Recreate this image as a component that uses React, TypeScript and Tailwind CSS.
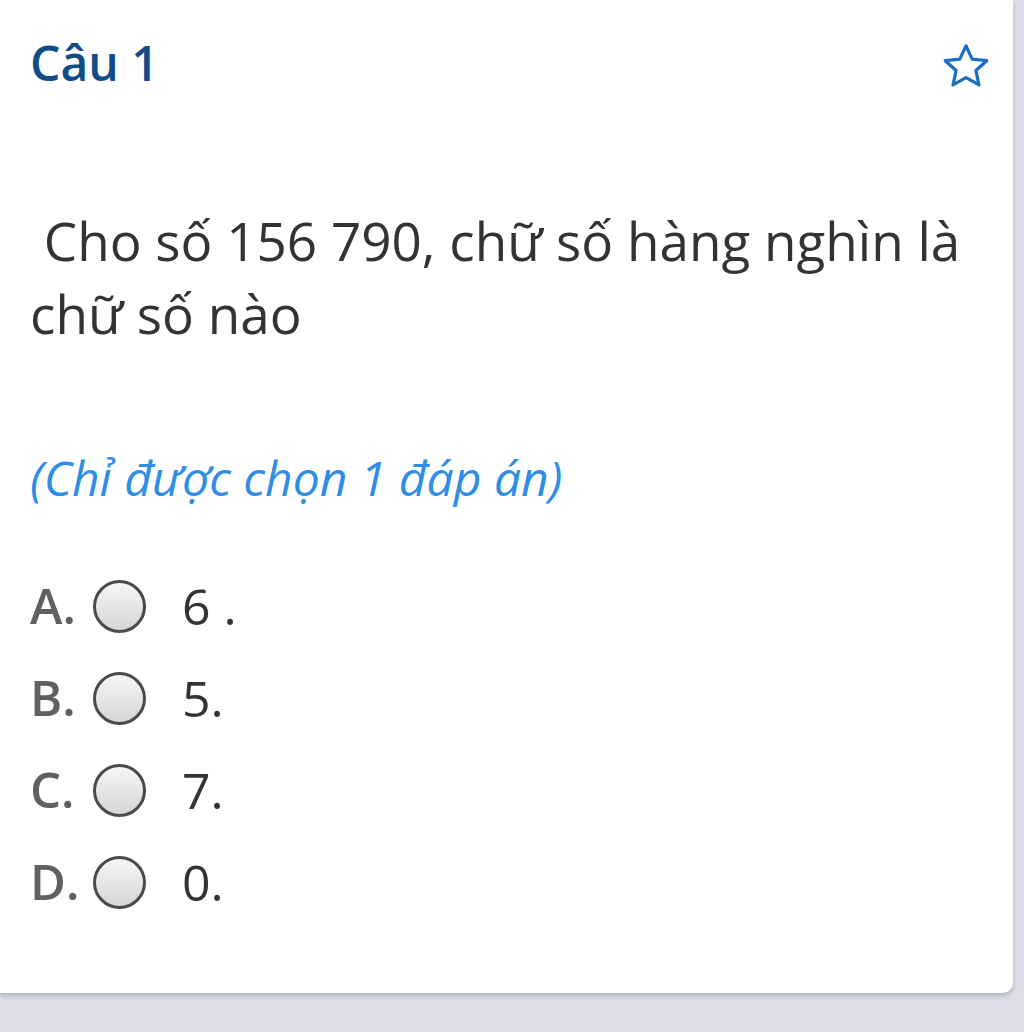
import React from "react";

const options = [
  { key: "A.", value: "6 ." },
  { key: "B.", value: "5." },
  { key: "C.", value: "7." },
  { key: "D.", value: "0." },
];

export default function App() {
  return (
    <div
      className="w-[1024px] h-[1032px] bg-[#dcdde7] overflow-hidden"
      style={{ fontFamily: '"Open Sans", "Noto Sans", sans-serif' }}
    >
      <div className="w-[1013px] h-[993px] bg-white rounded-br-[10px] shadow-[0_3px_4px_rgba(140,145,170,0.55)] pl-[30px] pr-[24px] pt-[28px] flex flex-col">
        <div className="flex items-start justify-between">
          <div className="text-[48px] leading-[70px] font-semibold text-[#124c87]">Câu 1</div>
          <svg width="54" height="54" viewBox="0 0 24 24" className="mt-[12px] mr-[-4px]" fill="none" stroke="#1c6fc0" strokeWidth="1.45" strokeLinejoin="round">
            <path d="M12 2.6l2.75 5.9 6.45.7-4.8 4.35 1.35 6.4L12 16.7l-5.75 3.25 1.35-6.4-4.8-4.35 6.45-.7z" />
          </svg>
        </div>
        <div className="mt-[106px] text-[53px] leading-[73px] text-[#333333]">
          {"\u00a0"}Cho số 156 790, chữ số hàng nghìn là chữ số nào
        </div>
        <div className="mt-[98px] text-[48px] leading-[60px] italic text-[#2f8ee3]">(Chỉ được chọn 1 đáp án)</div>
        <div className="mt-[66px] flex flex-col gap-[28px]">
          {options.map((o) => (
            <div key={o.key} className="flex items-center h-[64px]">
              <div className="w-[63px] text-[49px] font-semibold text-[#606060]">{o.key}</div>
              <div className="w-[53px] h-[53px] rounded-full border-[3px] border-[#4a4a4a] bg-gradient-to-b from-[#f6f6f6] to-[#d6d6d6]" />
              <div className="ml-[36px] text-[50px] text-[#333333]">{o.value}</div>
            </div>
          ))}
        </div>
      </div>
    </div>
  );
}
